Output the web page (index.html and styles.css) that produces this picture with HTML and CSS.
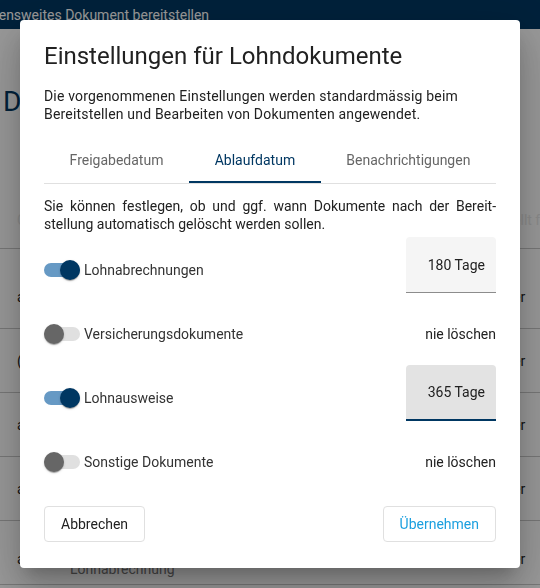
FILE: index.html
```html
<!DOCTYPE html>
<html lang="de">
<head>
  <meta charset="UTF-8">
  <meta name="viewport" content="width=device-width, initial-scale=1.0">
  <title>Einstellungen für Lohndokumente</title>
  <link rel="stylesheet" href="styles.css">
</head>
<body>
  <header class="topbar">
    <span class="topbar-title">Unternehmensweites Dokument bereitstellen</span>
  </header>

  <main class="page">
    <h1 class="page-title">Dokumente</h1>
    <div class="toolbar">&#8942;</div>
    <div class="table">
      <div class="row head">
        <span>Gültig</span>
        <span>Dokument</span>
        <span>Zugestellt für</span>
      </div>
      <div class="row first">
        <span>aktiv</span>
        <span>Lohnabrechnung</span>
        <span>Benutzer</span>
      </div>
      <div class="row">
        <span>(leer)</span>
        <span>Versicherung</span>
        <span>Benutzer</span>
      </div>
      <div class="row">
        <span>aktiv</span>
        <span>Lohnausweis</span>
        <span>Benutzer</span>
      </div>
      <div class="row">
        <span>aktiv</span>
        <span>Lohnausweis</span>
        <span>Benutzer</span>
      </div>
      <div class="row last">
        <span>aktiv</span>
        <span class="two-lines">Dezember 2023<small>Lohnabrechnung</small></span>
        <span>Benutzer</span>
      </div>
    </div>
  </main>

  <!-- dialog sits over the dimmed page -->
  <div class="backdrop"></div>
  <div class="dialog-wrap">
    <div class="dialog">
      <h2 class="dialog-title">Einstellungen für Lohndokumente</h2>
      <p class="dialog-intro">Die vorgenommenen Einstellungen werden standardmässig beim Bereitstellen und Bearbeiten von Dokumenten angewendet.</p>

      <div class="tabs">
        <div class="tab">Freigabedatum</div>
        <div class="tab active">Ablaufdatum</div>
        <div class="tab">Benachrichtigungen</div>
      </div>

      <p class="tab-text">Sie können festlegen, ob und ggf. wann Dokumente nach der Bereit&shy;stellung automatisch gelöscht werden sollen.</p>

      <div class="settings">
        <div class="setting">
          <span class="toggle on"></span>
          <span class="setting-label">Lohnabrechnungen</span>
          <div class="days">180 Tage</div>
        </div>
        <div class="setting">
          <span class="toggle"></span>
          <span class="setting-label">Versicherungsdokumente</span>
          <span class="never">nie löschen</span>
        </div>
        <div class="setting">
          <span class="toggle on"></span>
          <span class="setting-label">Lohnausweise</span>
          <div class="days focused">365 Tage</div>
        </div>
        <div class="setting">
          <span class="toggle"></span>
          <span class="setting-label">Sonstige Dokumente</span>
          <span class="never">nie löschen</span>
        </div>
      </div>

      <div class="actions">
        <button class="btn">Abbrechen</button>
        <button class="btn primary">Übernehmen</button>
      </div>
    </div>
  </div>
</body>
</html>
```

FILE: styles.css
```css
body {
  margin: 0;
  font-family: Roboto, "Noto Sans", sans-serif;
  font-size: 14px;
  color: #212121;
  background: #ffffff;
  overflow: hidden;
}

/* page behind the dialog */
.topbar {
  height: 29px;
  background: #003762;
  color: #ffffff;
  display: flex;
  align-items: center;
  overflow: hidden;
  white-space: nowrap;
}

.topbar-title {
  margin-left: -70px;
  font-size: 14px;
}

.page {
  padding: 0 0 0 3px;
}

.page-title {
  margin: 55px 0 0 0;
  font-size: 28px;
  line-height: 36px;
  font-weight: 400;
  color: #003762;
}

.toolbar {
  height: 60px;
  box-sizing: border-box;
  padding: 19px 0 0 12px;
  line-height: 20px;
  color: #333;
  font-size: 16px;
  font-family: "DejaVu Sans", sans-serif;
}

.table {
  margin: 11px 0 0 -3px;
}

.row {
  display: grid;
  grid-template-columns: 53px 1fr 70px;
  align-items: center;
  height: 64px;
  box-sizing: border-box;
  padding-left: 17px;
  border-bottom: 1px solid #c8c8c8;
  color: #222;
  white-space: nowrap;
}

.row.head {
  height: 58px;
  color: #e8e8e8;
}

.row.first {
  height: 80px;
  padding-top: 16px;
}

.row.last {
  padding-top: 12px;
}

.two-lines {
  display: flex;
  flex-direction: column;
  line-height: 20px;
}

.two-lines small {
  font-size: 14px;
  color: #777;
}

.backdrop {
  position: fixed;
  inset: 0;
  background: rgba(0, 0, 0, 0.4);
}

.dialog-wrap {
  position: fixed;
  inset: 0;
  display: flex;
  justify-content: center;
  align-items: flex-start;
  padding-top: 20px;
}

.dialog {
  width: 500px;
  box-sizing: border-box;
  padding: 20px 24px 26px 24px;
  background: #ffffff;
  border-radius: 4px;
  box-shadow: 0 11px 15px -7px rgba(0, 0, 0, 0.2), 0 24px 38px 3px rgba(0, 0, 0, 0.14), 0 9px 46px 8px rgba(0, 0, 0, 0.12);
}

.dialog-title {
  margin: 0;
  font-size: 24px;
  line-height: 32px;
  font-weight: 400;
  color: #212121;
}

.dialog-intro {
  margin: 16px 0 0 0;
  line-height: 17.5px;
  letter-spacing: 0.18px;
  color: #212121;
}

.tabs {
  display: flex;
  margin-top: 13px;
  height: 48px;
  border-bottom: 1px solid #e0e0e0;
  box-sizing: border-box;
}

.tab {
  flex: 1 1 auto;
  padding: 0 24px;
  display: flex;
  align-items: center;
  justify-content: center;
  color: #666666;
  white-space: nowrap;
}

.tab.active {
  color: #003762;
  box-shadow: inset 0 -2px 0 #003762;
}

.tab-text {
  margin: 14px 0 0 0;
  line-height: 17.5px;
  text-align: justify;
  hyphens: manual;
  color: #212121;
}

.settings {
  margin-top: 5px;
}

.setting {
  display: flex;
  align-items: center;
  height: 64px;
}

.toggle {
  position: relative;
  width: 36px;
  height: 14px;
  border-radius: 7px;
  background: #e0e0e0;
  flex: none;
}

.toggle::after {
  content: "";
  position: absolute;
  top: -3px;
  left: 0;
  width: 20px;
  height: 20px;
  border-radius: 50%;
  background: #666666;
  box-shadow: 0 2px 1px -1px rgba(0, 0, 0, 0.2), 0 1px 1px 0 rgba(0, 0, 0, 0.14), 0 1px 3px 0 rgba(0, 0, 0, 0.12);
}

.toggle.on {
  background: #6699c4;
}

.toggle.on::after {
  left: 16px;
  background: #003762;
}

.setting-label {
  margin-left: 4px;
  flex: 1;
  color: #333333;
}

.days {
  width: 90px;
  height: 56px;
  margin-bottom: 10px;
  box-sizing: border-box;
  padding: 0 11px;
  display: flex;
  align-items: center;
  justify-content: flex-end;
  background: #f5f5f5;
  border-radius: 4px 4px 0 0;
  border-bottom: 1px solid #8c8c8c;
  color: #212121;
}

.days.focused {
  background: #e3e3e3;
  border-bottom: 2px solid #003762;
}

.never {
  color: #212121;
}

.actions {
  display: flex;
  justify-content: space-between;
  margin-top: 12px;
}

.btn {
  height: 36px;
  padding: 0 16px;
  font-family: Roboto, "Noto Sans", sans-serif;
  font-size: 14px;
  color: #212121;
  background: #ffffff;
  border: 1px solid #e0e0e0;
  border-radius: 4px;
  cursor: pointer;
}

.btn.primary {
  color: #1a9fdf;
}
```
